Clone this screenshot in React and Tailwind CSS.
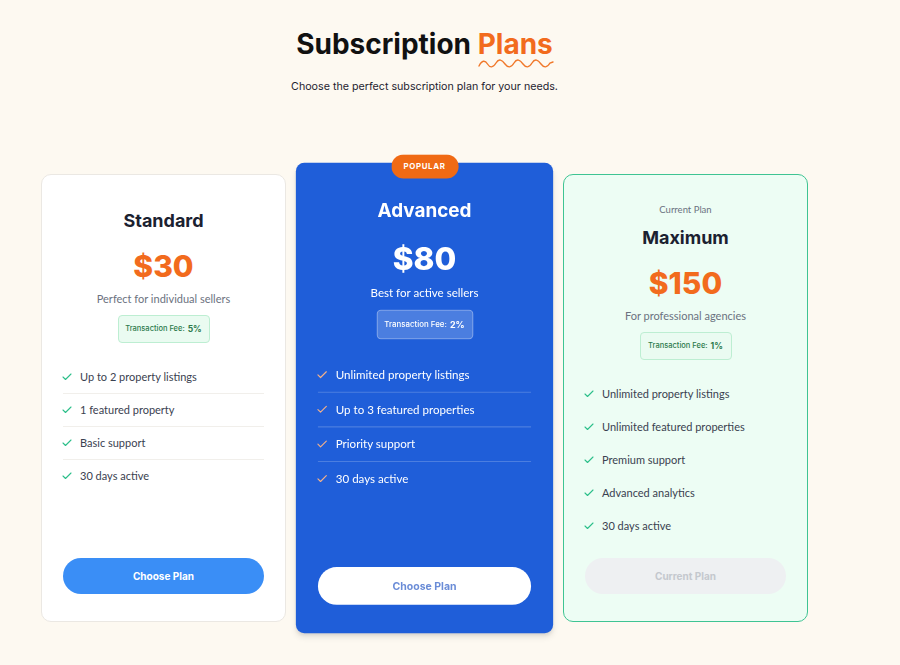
import { Check } from "lucide-react";

const plans = [
  {
    name: "Standard",
    price: "$30",
    desc: "Perfect for individual sellers",
    fee: "5%",
    features: ["Up to 2 property listings", "1 featured property", "Basic support", "30 days active"],
  },
  {
    name: "Advanced",
    price: "$80",
    desc: "Best for active sellers",
    fee: "2%",
    popular: true,
    features: ["Unlimited property listings", "Up to 3 featured properties", "Priority support", "30 days active"],
  },
  {
    name: "Maximum",
    price: "$150",
    desc: "For professional agencies",
    fee: "1%",
    current: true,
    features: [
      "Unlimited property listings",
      "Unlimited featured properties",
      "Premium support",
      "Advanced analytics",
      "30 days active",
    ],
  },
];

const bodyFont = { fontFamily: "Lato, 'Open Sans', sans-serif" };
const headFont = { fontFamily: "Inter, 'Noto Sans', sans-serif" };

function Squiggle() {
  return (
    <svg width="76" height="10" viewBox="0 0 76 10" className="absolute left-0 top-[32px]" fill="none">
      <path
        d="M1 7 C4 1, 7 1, 9.5 5 S15 9, 18 4 S24 1, 27 5 S33 9, 36 4 S42 1, 45 5 S51 9, 54 4 S60 1, 63 5 S69 9, 72 4 L75 3"
        stroke="#f0782a"
        strokeWidth="1.4"
        strokeLinecap="round"
      />
    </svg>
  );
}

function FeeBox({ fee, dark }) {
  return (
    <div
      className={`mx-auto mt-[8px] flex h-[28px] w-[92px] items-center justify-center gap-[3px] rounded-[4px] border ${
        dark ? "border-white/30 bg-white/20 text-white" : "border-[#bdeed2] bg-[#eafbf1] text-[#2d7a4c]"
      }`}
      style={headFont}
    >
      <span className="text-[7.5px] font-medium">Transaction Fee:</span>
      <span className="text-[8.5px] font-bold">{fee}</span>
    </div>
  );
}

function PlanCard({ plan }) {
  const dark = plan.popular;
  const cardCls = dark
    ? "bg-[#1f5ed9] scale-105 rounded-[8px] shadow-md"
    : plan.current
    ? "bg-[#edfdf4] border border-[#3fc493] rounded-[10px]"
    : "bg-white border border-[#ebe8e3] rounded-[10px]";

  return (
    <div className={`relative flex h-[448px] w-[245px] flex-col px-[21px] pb-[27px] ${plan.current ? "pt-[28px]" : "pt-[34px]"} ${cardCls}`}>
      {dark && (
        <div
          className="absolute -top-[8px] left-1/2 flex h-[23px] w-[64px] -translate-x-1/2 items-center justify-center rounded-full bg-[#f06a14] text-[7.5px] font-bold tracking-[0.6px] text-white"
          style={headFont}
        >
          POPULAR
        </div>
      )}
      {plan.current && (
        <div className="mb-[9px] text-center text-[9.5px] leading-[14px] text-[#6b7280]" style={bodyFont}>
          Current Plan
        </div>
      )}
      <h3
        className={`text-center text-[18px] font-bold leading-[24px] ${dark ? "text-white" : "text-[#1b2130]"}`}
        style={headFont}
      >
        {plan.name}
      </h3>
      <div
        className={`mt-[15px] text-center text-[30px] font-extrabold leading-[36px] ${dark ? "text-white" : "text-[#f26b1d]"}`}
        style={headFont}
      >
        {plan.price}
      </div>
      <p
        className={`mt-[7px] text-center text-[11px] leading-[16px] ${dark ? "text-white" : "text-[#6b7280]"}`}
        style={bodyFont}
      >
        {plan.desc}
      </p>
      <FeeBox fee={plan.fee} dark={dark} />
      <ul className="mt-[18px]">
        {plan.features.map((f, i) => (
          <li
            key={i}
            className={`flex items-center gap-[7px] py-[8px] ${
              i < plan.features.length - 1
                ? dark
                  ? "border-b border-white/20"
                  : plan.current
                  ? "border-b border-transparent"
                  : "border-b border-[#f1efeb]"
                : "border-b border-transparent"
            }`}
          >
            <Check
              size={12}
              strokeWidth={2.2}
              className={`-ml-[2px] ${dark ? "text-[#f2b08a]" : "text-[#2cbf8a]"}`}
            />
            <span className={`text-[11px] leading-[16px] ${dark ? "text-white" : "text-[#3a4150]"}`} style={bodyFont}>
              {f}
            </span>
          </li>
        ))}
      </ul>
      <button
        className={`mt-auto h-[36px] w-full rounded-full text-[10px] font-bold ${
          dark
            ? "bg-white text-[#6a8cd7]"
            : plan.current
            ? "bg-[#eef0f2] text-[#c4c8ce]"
            : "bg-[#3a8ef6] text-white"
        }`}
        style={headFont}
      >
        {plan.current ? "Current Plan" : "Choose Plan"}
      </button>
    </div>
  );
}

export default function App() {
  return (
    <div className="min-h-screen w-full bg-[#fdf9f1]">
      <div className="flex w-[849px] flex-col items-center pt-[27px]">
        <h1 className="text-[28px] font-bold leading-[34px] text-[#111111]" style={headFont}>
          Subscription{" "}
          <span className="relative text-[#f26b1d]">
            Plans
            <Squiggle />
          </span>
        </h1>
        <p className="mt-[18px] text-[10.7px] leading-[16px] text-[#1f2430]" style={headFont}>
          Choose the perfect subscription plan for your needs.
        </p>
        <div className="mt-[79px] flex gap-[16px]">
          {plans.map((p) => (
            <PlanCard key={p.name} plan={p} />
          ))}
        </div>
      </div>
    </div>
  );
}
